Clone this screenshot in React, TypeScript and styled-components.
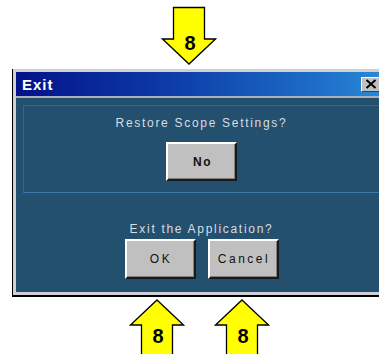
import React, { FC } from "react";
import styled, { createGlobalStyle } from "styled-components";

const colors = {
  body: "#23506f",
  panelLine: "#33678c",
  panelBottom: "#3a78ad",
  frame: "#cdd1d5",
  button: "#c0c0c0",
  text: "#d9dde0",
  arrow: "#ffff00",
};

const GlobalStyle = createGlobalStyle`
  html, body {
    margin: 0;
    padding: 0;
    background: #fff;
    overflow: hidden;
  }
  body {
    font-family: "Liberation Sans", Arial, sans-serif;
  }
`;

const Styled = {
  Page: styled.div`
    width: 379px;
    height: 354px;
    overflow: hidden;
    display: flex;
    flex-direction: column;
    background: #fff;
  `,
  ArrowRow: styled.div<{ $pad: number; $gap?: number; $height: number }>`
    display: flex;
    gap: ${(p) => p.$gap ?? 0}px;
    padding-left: ${(p) => p.$pad}px;
    height: ${(p) => p.$height}px;
    flex-shrink: 0;
  `,
  Dialog: styled.div`
    width: 379px;
    margin-left: 12px;
    flex-shrink: 0;
    box-sizing: border-box;
    border-bottom: 2px solid #000;
    border-left: 1px solid #000;
  `,
  Frame: styled.div`
    border-top: 3px solid ${colors.frame};
    border-left: 3px solid ${colors.frame};
    border-right: 4px solid ${colors.frame};
    border-bottom: 3px solid ${colors.frame};
    box-shadow: inset 1px 0 0 #5b87ad;
  `,
  TitleBar: styled.div`
    height: 24px;
    display: flex;
    align-items: center;
    justify-content: space-between;
    padding-left: 6px;
    background: linear-gradient(90deg, #03128a 0%, #0c3aa6 40%, #1d6cc6 80%, #2a8ad8 100%);
    border-bottom: 2px solid #a9b2bb;
  `,
  Title: styled.span`
    color: #fff;
    font-weight: bold;
    font-size: 15px;
    letter-spacing: 1px;
  `,
  CloseButton: styled.div`
    width: 20px;
    height: 15px;
    margin-right: 6px;
    box-sizing: border-box;
    background: ${colors.button};
    border-top: 1px solid #fff;
    border-left: 1px solid #fff;
    border-right: 1px solid #404040;
    border-bottom: 1px solid #404040;
    display: flex;
    align-items: center;
    padding-left: 3px;
  `,
  Body: styled.div`
    background: ${colors.body};
    padding: 7px 7px 13px;
    display: flex;
    flex-direction: column;
    align-items: center;
  `,
  Group: styled.div`
    align-self: stretch;
    box-sizing: border-box;
    border: 1px solid ${colors.panelLine};
    border-bottom-color: ${colors.panelBottom};
    padding: 10px 0 11px;
    display: flex;
    flex-direction: column;
    align-items: center;
  `,
  Prompt: styled.div<{ $top?: number }>`
    color: ${colors.text};
    font-size: 12px;
    line-height: 14px;
    letter-spacing: 1.7px;
    margin-top: ${(p) => p.$top ?? 0}px;
  `,
  ButtonRow: styled.div<{ $top: number }>`
    display: flex;
    gap: 12px;
    margin-top: ${(p) => p.$top}px;
  `,
  Button: styled.div<{ $bold?: boolean; $height?: number }>`
    width: 71px;
    height: ${(p) => p.$height ?? 40}px;
    box-sizing: border-box;
    background: ${colors.button};
    border-top: 2px solid #fff;
    border-left: 2px solid #fff;
    border-right: 2px solid #1a1a1a;
    border-bottom: 2px solid #1a1a1a;
    box-shadow: inset -1px -1px 0 #808080;
    display: flex;
    align-items: center;
    justify-content: center;
    color: #111;
    font-size: 12px;
    font-weight: ${(p) => (p.$bold ? "bold" : "normal")};
    letter-spacing: ${(p) => (p.$bold ? "1.5px" : "2.5px")};
    padding-left: 2px;
  `,
  ArrowLabel: styled.text`
    font-family: "Liberation Sans Narrow", "Liberation Sans", Arial, sans-serif;
    font-weight: bold;
    font-size: 20px;
    fill: #000;
  `,
};

interface ArrowProps {
  direction: "up" | "down";
  height: number;
  tip: number;
  labelY: number;
}

// yellow block arrow with a step number in it
const Arrow: FC<ArrowProps> = ({ direction, height, tip, labelY }) => {
  const w = 56;
  const cx = 28;
  const shaft = 15.5;
  const head = 26.5;
  const headLen = 25;
  let points: number[][];
  if (direction === "down") {
    const base = tip - headLen;
    points = [
      [cx - shaft, 7.5],
      [cx + shaft, 7.5],
      [cx + shaft, base],
      [cx + head, base],
      [cx, tip],
      [cx - head, base],
      [cx - shaft, base],
    ];
  } else {
    const base = tip + headLen;
    points = [
      [cx, tip],
      [cx + head, base],
      [cx + shaft, base],
      [cx + shaft, height + 2],
      [cx - shaft, height + 2],
      [cx - shaft, base],
      [cx - head, base],
    ];
  }
  return (
    <svg width={w} height={height} viewBox={`0 0 ${w} ${height}`}>
      <polygon
        points={points.map((p) => p.join(",")).join(" ")}
        fill={colors.arrow}
        stroke="#000"
        strokeWidth={1.3}
      />
      <Styled.ArrowLabel x={cx + 1} y={labelY} textAnchor="middle">
        8
      </Styled.ArrowLabel>
    </svg>
  );
};

const CloseIcon: FC = () => (
  <svg width={12} height={10} viewBox="0 0 12 10">
    <path d="M1.5 1 L10.5 9 M10.5 1 L1.5 9" stroke="#000" strokeWidth={2} />
  </svg>
);

const App: FC = () => {
  return (
    <>
      <GlobalStyle />
      <Styled.Page>
        <Styled.ArrowRow $pad={161} $height={69}>
          <Arrow direction="down" height={69} tip={64} labelY={50} />
        </Styled.ArrowRow>

        <Styled.Dialog>
          <Styled.Frame>
            <Styled.TitleBar>
              <Styled.Title>Exit</Styled.Title>
              <Styled.CloseButton>
                <CloseIcon />
              </Styled.CloseButton>
            </Styled.TitleBar>
            <Styled.Body>
              <Styled.Group>
                <Styled.Prompt>Restore Scope Settings?</Styled.Prompt>
                <Styled.ButtonRow $top={12}>
                  <Styled.Button $bold $height={39}>
                    No
                  </Styled.Button>
                </Styled.ButtonRow>
              </Styled.Group>
              <Styled.Prompt $top={29}>Exit the Application?</Styled.Prompt>
              <Styled.ButtonRow $top={3}>
                <Styled.Button>OK</Styled.Button>
                <Styled.Button>Cancel</Styled.Button>
              </Styled.ButtonRow>
            </Styled.Body>
          </Styled.Frame>
        </Styled.Dialog>

        <Styled.ArrowRow $pad={129} $gap={29} $height={57}>
          <Arrow direction="up" height={57} tip={3} labelY={46} />
          <Arrow direction="up" height={57} tip={3} labelY={46} />
        </Styled.ArrowRow>
      </Styled.Page>
    </>
  );
};

export default App;
